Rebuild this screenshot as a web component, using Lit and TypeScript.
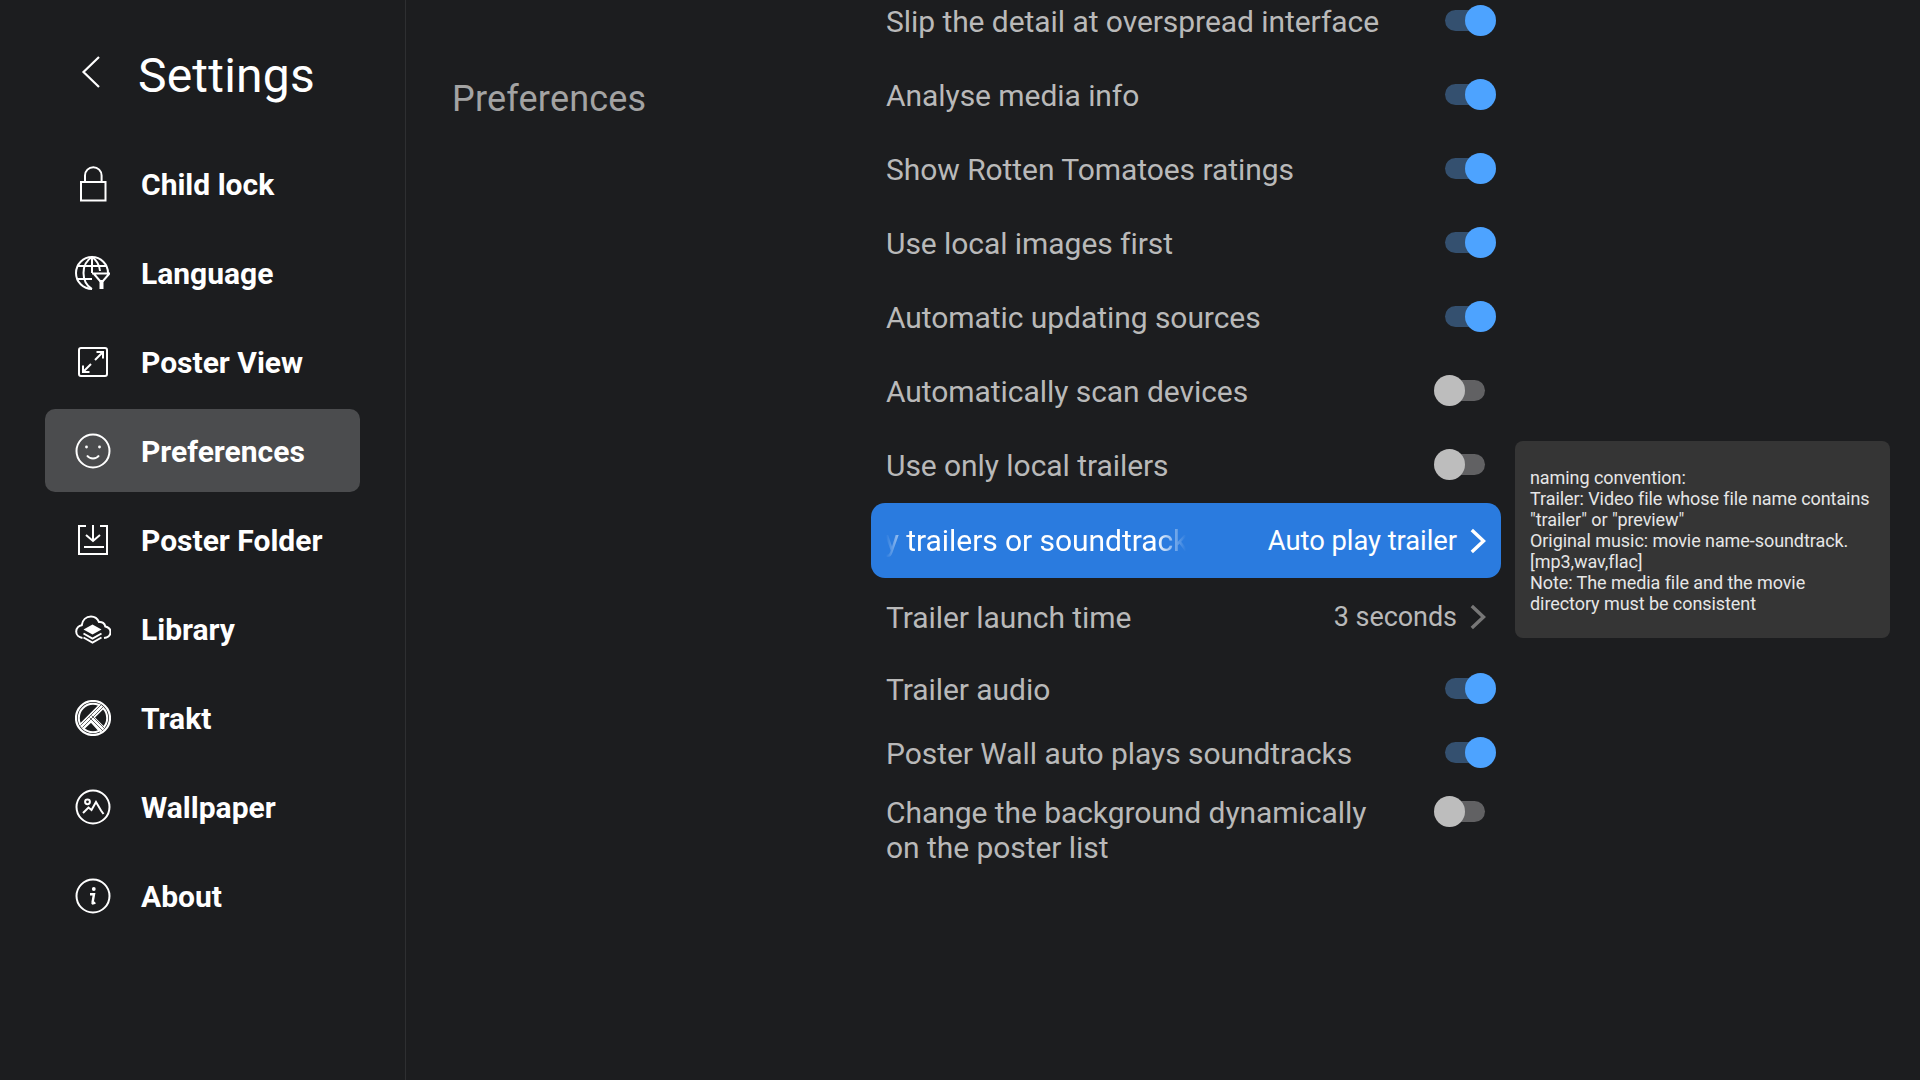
import { LitElement, html, css, svg } from "lit";
import { customElement } from "lit/decorators.js";

const icons: Record<string, any> = {
  lock: svg`<path d="M6 16h24.500v18.500H6z"/><path d="M10 16V9.500a8.300 8.300 0 0 1 16.600 0V16"/>`,
  globe: svg`<path d="M17 34a16 16 0 1 1 16-16"/><path d="M17 34c-5-3-8.500-9-8.500-16S12 5 17 2c4.500 3 7.500 8 8 14"/><path d="M2 11h30M2 24h15M17 2v16"/><path d="M17 18.500h18M19 19l6 7h3l6-7" fill="#1c1d1f"/><path d="M24.500 25h4v9h-4z" fill="#fff" stroke="none"/>`,
  expand: svg`<rect x="4" y="4" width="28" height="28" rx="2"/><path d="M20 16l8-8M21.500 8H28v6.500M16 20l-8 8M14.500 28H8v-6.500"/>`,
  smile: svg`<circle cx="18" cy="18" r="16.500"/><path d="M12 22.500c3 4 9 4 12 0"/><circle cx="11.500" cy="14" r="1.400" fill="#fff" stroke="none"/><circle cx="24.500" cy="14" r="1.400" fill="#fff" stroke="none"/>`,
  folder: svg`<path d="M11 4H4v28h28V4h-7M9 25h20"/><path d="M18 3v16M11 13l7 6 7-6"/>`,
  library: svg`<path d="M7.500 27C4 26.500 1.200 24 1.200 20.500s2.800-6 5.600-6.300C7.400 9 11 5.500 16 5.500c3.500 0 6.500 2 8 5.500 3-.5 5.800 1.500 6.300 4.500 3 .7 5.200 2.800 5.200 5.500 0 3.200-2.800 5.500-6.500 6"/><path d="M17.500 13.500l9 5-9 5-9-5z" fill="#fff" stroke="none"/><path d="M8.500 22.500l9 5 9-5M8.500 26.500l9 5 9-5" stroke-width="2"/>`,
  trakt: svg`<circle cx="18" cy="18" r="17" stroke-width="2.200"/><circle cx="18" cy="18" r="14.200" stroke-width="2"/><g stroke="#fff" stroke-width="6.500"><path d="M6.500 26.500L27 6"/><path d="M16 18l12 12"/></g><g stroke="#555" stroke-width="0.900"><path d="M5.500 25.500L26 5M7.500 27.500L28 7"/><path d="M16.500 15.500L30 29M14.500 17.500L28 31"/></g><path d="M8 29l8-7.500 8 9" stroke-width="1.800"/>`,
  wallpaper: svg`<circle cx="18" cy="18" r="16.500"/><circle cx="12.500" cy="12.800" r="2.400"/><path d="M8 24l5.500-5.500 3 2.500 4.500-8 5 8.500 2.500 3.500"/>`,
  about: svg`<circle cx="18" cy="18" r="16.500"/><circle cx="18.800" cy="11" r="1.900" fill="#fff" stroke="none"/><path d="M15 16.200h4l-1.500 8.500c-.2 1 .8 1 2.800-.2" stroke-width="2.400"/>`,
};

const nav = [
  ["Child lock", "lock"],
  ["Language", "globe"],
  ["Poster View", "expand"],
  ["Preferences", "smile"],
  ["Poster Folder", "folder"],
  ["Library", "library"],
  ["Trakt", "trakt"],
  ["Wallpaper", "wallpaper"],
  ["About", "about"],
];

const toggles: [string, boolean][] = [
  ["Slip the detail at overspread interface", true],
  ["Analyse media info", true],
  ["Show Rotten Tomatoes ratings", true],
  ["Use local images first", true],
  ["Automatic updating sources", true],
  ["Automatically scan devices", false],
  ["Use only local trailers", false],
];

const chevron = html`<svg class="chev" viewBox="0 0 16 28"><path d="M1.800 3L13.500 14 1.800 25"/></svg>`;

@customElement("app-root")
export class AppRoot extends LitElement {
  static styles = css`
    :host {
      display: block;
      width: 1920px;
      height: 1080px;
      overflow: hidden;
      background: #1c1d1f;
      font-family: Roboto, "Noto Sans", sans-serif;
      position: relative;
    }
    .page { display: grid; grid-template-columns: 406px 465px 630px; height: 1080px; }
    .side { border-right: 1px solid #2e2f31; padding: 0 45px; box-sizing: border-box; }
    .head { display: flex; align-items: center; height: 139px; padding: 13px 0 0 36px; box-sizing: border-box; gap: 37px; }
    .back { width: 20px; height: 34px; fill: none; stroke: #fff; stroke-width: 2.200; margin-top: -8px; }
    .head h1 { margin: 0; font-size: 48px; font-weight: 400; color: #fff; line-height: 1; letter-spacing: 0.2px; }
    .nav { display: grid; grid-auto-rows: 89px; }
    .item { display: flex; align-items: center; gap: 30px; padding-left: 30px; color: #fff; font-size: 30px; font-weight: 700; border-radius: 10px; margin: 3px 0; }
    .item span { padding-top: 2px; }
    .item.active { background: #4b4c4e; }
    .item svg { width: 36px; height: 36px; fill: none; stroke: #fff; stroke-width: 2; flex: none; }
    .title { margin: 79px 0 0 46px; font-size: 36px; font-weight: 400; color: #a3a3a3; line-height: 40px; letter-spacing: 0.2px; }
    .list { margin-top: -16px; font-size: 30px; color: #b9b9b9; letter-spacing: -0.06px; }
    .row { display: flex; align-items: center; justify-content: space-between; height: 74px; padding: 0 15px; box-sizing: border-box; white-space: nowrap; }
    .switch { width: 52px; height: 31px; position: relative; flex: none; }
    .switch .track { position: absolute; top: 5px; height: 21px; width: 45px; border-radius: 11px; }
    .switch .knob { position: absolute; top: 0; width: 31px; height: 31px; border-radius: 50%; }
    .switch.on { margin: -1px -11px 0 0; }
    .switch.off { margin: -2px -6px 0 0; }
    .switch.on .track { left: 0; background: #34506f; }
    .switch.on .knob { left: 20px; background: #4da3ff; }
    .switch.off .track { left: 0; background: #616163; }
    .switch.off .knob { left: -6px; background: #bdbdbd; }
    .sel { background: #2a7bdf; color: #fff; height: 75px; margin-top: 1px; border-radius: 14px; }
    .marquee { width: 300px; overflow: hidden; -webkit-mask-image: linear-gradient(90deg, transparent 0, #000 24px, #000 270px, transparent 300px); mask-image: linear-gradient(90deg, transparent 0, #000 24px, #000 270px, transparent 300px); }
    .marquee span { display: inline-block; margin-left: -111px; }
    .value { display: flex; align-items: center; gap: 13px; flex: none; font-size: 27.400px; }
    .plain .value { font-size: 27px; }
    .chev { width: 16px; height: 28px; fill: none; stroke: currentColor; stroke-width: 3.400; }
    .plain .chev { color: #777; }
    .launch { height: 78px; }
    .audio { height: 66px; }
    .wall { height: 62px; }
    .multi { height: auto; align-items: flex-start; padding-top: 11px; }
    .multi .text { width: 500px; line-height: 35px; white-space: normal; }
    .multi .switch.off { margin-top: 1px; }
    .tip {
      position: absolute; left: 1515px; top: 441px; width: 375px; height: 197px;
      background: #353535; border-radius: 8px; box-sizing: border-box; padding: 26px 15px 0;
      color: #e6e6e6; font-size: 18px; line-height: 21px; letter-spacing: -0.07px;
    }
  `;

  render() {
    return html`<div class="page">
      <aside class="side">
        <div class="head">
          <svg class="back" viewBox="0 0 20 34"><path d="M18 2L2.500 17 18 32"/></svg>
          <h1>Settings</h1>
        </div>
        <div class="nav">
          ${nav.map(([t, i]) => html`<div class="item ${t === "Preferences" ? "active" : ""}"><svg viewBox="0 0 36 36">${icons[i]}</svg><span>${t}</span></div>`)}
        </div>
      </aside>
      <div class="title">Preferences</div>
      <div class="list">
        ${toggles.map(([t, on]) => html`<div class="row"><span>${t}</span><div class="switch ${on ? "on" : "off"}"><i class="track"></i><i class="knob"></i></div></div>`)}
        <div class="row sel"><div class="marquee"><span>Auto play trailers or soundtracks</span></div><div class="value">Auto play trailer ${chevron}</div></div>
        <div class="row plain launch"><span>Trailer launch time</span><div class="value">3 seconds ${chevron}</div></div>
        <div class="row audio"><span>Trailer audio</span><div class="switch on"><i class="track"></i><i class="knob"></i></div></div>
        <div class="row wall"><span>Poster Wall auto plays soundtracks</span><div class="switch on"><i class="track"></i><i class="knob"></i></div></div>
        <div class="row multi"><span class="text">Change the background dynamically on the poster list</span><div class="switch off"><i class="track"></i><i class="knob"></i></div></div>
      </div>
    </div>
    <div class="tip">naming convention:<br />Trailer: Video file whose file name contains<br />"trailer" or "preview"<br />Original music: movie name-soundtrack.<br />[mp3,wav,flac]<br />Note: The media file and the movie<br />directory must be consistent</div>`;
  }
}
